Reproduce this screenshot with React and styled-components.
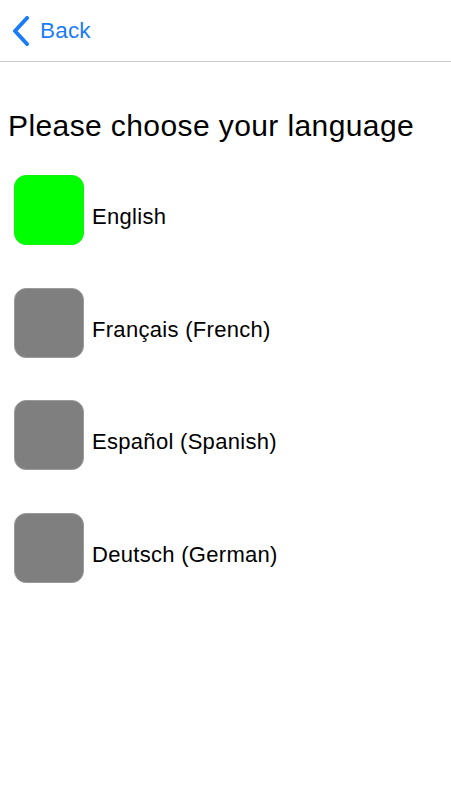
import React from "react";
import styled, { createGlobalStyle } from "styled-components";

const GlobalStyle = createGlobalStyle`
  body {
    margin: 0;
    background: #ffffff;
    font-family: "Liberation Sans", Arial, sans-serif;
    color: #000000;
  }
`;

const Page = styled.div`
  width: 451px;
  min-height: 800px;
  background: #ffffff;
`;

const NavBar = styled.div`
  height: 61px;
  border-bottom: 1px solid #c8c8cc;
  display: flex;
  align-items: center;
  padding-left: 12px;
`;

const BackButton = styled.button`
  display: flex;
  align-items: center;
  gap: 10px;
  background: none;
  border: none;
  padding: 0;
  color: #1a7cf8;
  font-family: inherit;
  font-size: 22.5px;
  letter-spacing: 0.2px;
  cursor: pointer;
`;

const Content = styled.div`
  padding: 47px 0 0 0;
`;

const Title = styled.h1`
  margin: 0 0 32px 8px;
  font-size: 30px;
  font-weight: normal;
  line-height: 34px;
  letter-spacing: 0.4px;
`;

const List = styled.div`
  display: flex;
  flex-direction: column;
  gap: 42.7px;
  padding-left: 14px;
`;

const Row = styled.div`
  display: flex;
  align-items: center;
  gap: 8px;
  cursor: pointer;
`;

const Swatch = styled.div`
  width: 70px;
  height: 70px;
  border-radius: 12px;
  box-sizing: border-box;
  background: ${(props) => (props.selected ? "#00ff00" : "#7f7f7f")};
  border: 1px solid ${(props) => (props.selected ? "#10f010" : "#9a9a9a")};
`;

const Label = styled.span`
  font-size: 22px;
  letter-spacing: 0.3px;
  padding-top: 14px;
`;

const languages = [
  { name: "English", selected: true },
  { name: "Français (French)" },
  { name: "Español (Spanish)" },
  { name: "Deutsch (German)" },
];

const Chevron = () => (
  <svg width="18" height="30" viewBox="0 0 18 30">
    <path
      d="M15 2 L3 15 L15 28"
      fill="none"
      stroke="#1a7cf8"
      strokeWidth="4"
      strokeLinecap="round"
      strokeLinejoin="round"
    />
  </svg>
);

const App = () => (
  <Page>
    <GlobalStyle />
    <NavBar>
      <BackButton>
        <Chevron />
        Back
      </BackButton>
    </NavBar>
    <Content>
      <Title>Please choose your language</Title>
      <List>
        {languages.map((lang) => (
          <Row key={lang.name}>
            <Swatch selected={lang.selected} />
            <Label>{lang.name}</Label>
          </Row>
        ))}
      </List>
    </Content>
  </Page>
);

export default App;
